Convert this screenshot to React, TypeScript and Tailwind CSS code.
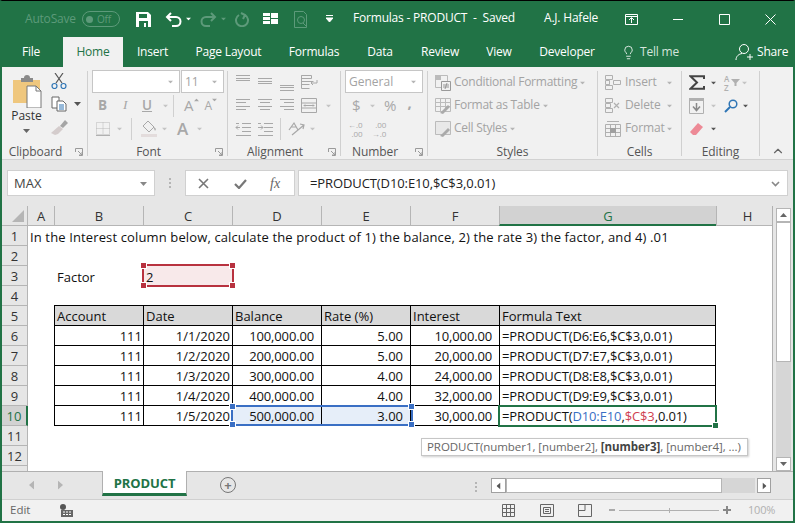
import type { ReactNode } from "react";
import { ChevronUp, Lightbulb } from "lucide-react";

const GREY = "#a8a8a8";
const DIM = "#5d9a7a";

const TABS = [
  { label: "File", w: "w-[58px] mr-[3px]" },
  { label: "Home", w: "w-[60px]", active: true },
  { label: "Insert", w: "w-[59px]" },
  { label: "Page Layout", w: "w-[93px]" },
  { label: "Formulas", w: "w-[78px]" },
  { label: "Data", w: "w-[54px]" },
  { label: "Review", w: "w-[66px]" },
  { label: "View", w: "w-[52px]" },
  { label: "Developer", w: "w-[84px]" },
];

const COLS = ["A", "B", "C", "D", "E", "F", "G", "H"];

const RECORDS = [
  ["111", "1/1/2020", "100,000.00", "5.00", "10,000.00", "=PRODUCT(D6:E6,$C$3,0.01)"],
  ["111", "1/2/2020", "200,000.00", "5.00", "20,000.00", "=PRODUCT(D7:E7,$C$3,0.01)"],
  ["111", "1/3/2020", "300,000.00", "4.00", "24,000.00", "=PRODUCT(D8:E8,$C$3,0.01)"],
  ["111", "1/4/2020", "400,000.00", "4.00", "32,000.00", "=PRODUCT(D9:E9,$C$3,0.01)"],
  ["111", "1/5/2020", "500,000.00", "3.00", "30,000.00", ""],
];

function Ic({ w = 16, h = 16, children, className }: { w?: number; h?: number; children: ReactNode; className?: string }) {
  return (
    <svg width={w} height={h} viewBox={`0 0 ${w} ${h}`} fill="none" className={`shrink-0 ${className ?? ""}`}>
      {children}
    </svg>
  );
}

function Caret({ color = GREY, className }: { color?: string; className?: string }) {
  return (
    <Ic w={7} h={4} className={className}>
      <path d="M0 0h7L3.500 4z" fill={color} />
    </Ic>
  );
}

function Lines({ ys, xs, color = GREY }: { ys: number[]; xs: [number, number][]; color?: string }) {
  return (
    <Ic w={16} h={16}>
      {ys.map((y, i) => (
        <path key={y} d={`M${xs[i][0]} ${y + 0.5}H${xs[i][1]}`} stroke={color} />
      ))}
    </Ic>
  );
}

function Launcher() {
  return (
    <Ic w={8} h={8} className="absolute right-[4px] bottom-[0px]">
      <path d="M.5 4V.5H7.500V7.500H4M3 3l4 4M4 7h3V4" stroke="#9a9a9a" />
    </Ic>
  );
}

function Group({ label, w, children, launcher }: { label: string; w: string; children: ReactNode; launcher?: boolean }) {
  return (
    <div className={`relative flex h-[85px] shrink-0 flex-col border-r border-[#d0d0d0] ${w}`}>
      <div className="h-[69px] shrink-0">{children}</div>
      <div className={`mt-[4px] shrink-0 text-center text-[12px] leading-[15px] tracking-[-0.1px] text-[#555] ${launcher ? "pr-[18px]" : ""}`}>
        {label}
      </div>
      {launcher && <Launcher />}
    </div>
  );
}

function StyleRow({ label, icon }: { label: string; icon: ReactNode }) {
  return (
    <div className="flex h-[23px] items-center whitespace-nowrap pl-[7px]">
      {icon}
      <span className="-mt-px ml-[3px] text-[12px] tracking-[-0.25px] text-[#a3a3a3]">{label}</span>
      <Caret className="ml-[2px] scale-75" color="#b5b5b5" />
    </div>
  );
}

function CellRow({ label, icon }: { label: string; icon: ReactNode }) {
  return (
    <div className="flex h-[23px] items-center whitespace-nowrap pl-[7px]">
      {icon}
      <span className="-mt-px ml-[4px] w-[41px] text-[12px] tracking-[-0.1px] text-[#a3a3a3]">{label}</span>
      <Caret className="scale-75" color="#b5b5b5" />
    </div>
  );
}

function Ribbon() {
  return (
    <div className="flex h-[93px] border-b border-[#d2d2d2] bg-[#f1f1f1] pt-[4px]">
      <Group label="Clipboard" w="w-[86px]" launcher>
        <div className="flex h-full">
          <div className="flex w-[49px] flex-col items-center pt-[4px]">
            <Ic w={30} h={33}>
              <path d="M1 5h27v23H1z" fill="#efc77e" />
              <path d="M9 3h3a3 3 0 016 0h3v4H9z" fill="#8a8a8a" />
              <path d="M15 11h9l5 5v17H15z" fill="#fff" stroke="#777" />
              <path d="M24 11v5h5" stroke="#777" />
            </Ic>
            <span className="text-[12px] leading-[15px] text-[#333]">Paste</span>
            <Caret color="#666" className="mt-[6px]" />
          </div>
          <div className="flex flex-col pt-[2px]">
            <Ic w={16} h={16}>
              <path d="M4 0l7 10M12 0L5 10" stroke="#555" strokeWidth="1.200" />
              <circle cx="3.500" cy="13" r="2.500" stroke="#2f75b5" strokeWidth="1.200" />
              <circle cx="12.500" cy="13" r="2.500" stroke="#2f75b5" strokeWidth="1.200" />
            </Ic>
            <div className="mt-[7px] flex items-center gap-[7px]">
              <Ic w={16} h={16}>
                <path d="M1 1h7v11H1z" fill="#fff" stroke="#666" />
                <path d="M6 5h6l3 3v7H6z" fill="#fff" stroke="#666" />
                <path d="M8 9h5M8 11h5M8 13h5" stroke="#2f75b5" />
              </Ic>
              <Caret color="#555" />
            </div>
            <Ic w={17} h={15} className="mt-[8px]">
              <path d="M9 6l5-6 3 3-5 5z" fill="#a5a5a5" />
              <path d="M0 13l8-7 4 3-5 5-3 1z" fill="#d4cccc" />
            </Ic>
          </div>
        </div>
      </Group>
      <Group label="Font" w="w-[140px]" launcher>
        <div className="-mt-px flex h-[24px] gap-[1px] pl-[4px]">
          <div className="flex h-[23px] w-[88px] items-center justify-end border border-[#c6c6c6] bg-white pr-[5px]">
            <Caret color="#b5b5b5" className="scale-75" />
          </div>
          <div className="flex h-[23px] w-[43px] items-center justify-between border border-[#c6c6c6] bg-white pl-[3px] pr-[5px] text-[12px] text-[#a3a3a3]">
            11
            <Caret color="#b5b5b5" className="scale-75" />
          </div>
        </div>
        <div className="flex h-[23px] items-center pl-[10px] text-[13.500px] text-[#a8a8a8]">
          <span className="w-[25px] font-bold">B</span>
          <span className="w-[19px] font-['Liberation_Serif',serif] italic">I</span>
          <span className="w-[20px] font-semibold underline">U</span>
          <Caret color="#c4c4c4" className="scale-75" />
          <span className="ml-[4px] h-[22px] border-l border-[#d0d0d0]" />
          <span className="ml-[10px] text-[15px] leading-none">A</span>
          <Caret color="#a8a8a8" className="-ml-[1px] mb-[11px] rotate-180 scale-75" />
          <span className="ml-[5px] text-[12px] leading-none">A</span>
          <Caret color="#a8a8a8" className="-ml-[1px] mb-[11px] scale-75" />
        </div>
        <div className="flex h-[23px] items-center pl-[8px]">
          <Ic w={14} h={14}>
            <path d="M.5.5h13v12H.5zM7 .5v12M.5 6.500h13" stroke="#b8b8b8" strokeDasharray="1 1" />
            <path d="M0 13.500h14" stroke="#b0b0b0" />
          </Ic>
          <Caret color="#c4c4c4" className="ml-[6px] scale-75" />
          <span className="ml-[8px] h-[22px] border-l border-[#d0d0d0]" />
          <Ic w={16} h={17} className="ml-[9px]">
            <path d="M7 1l6 6-5 5-6-6z" stroke="#a8a8a8" />
            <path d="M12 6l3 3-1 2z" fill="#a8a8a8" />
            <path d="M0 14h16v3H0z" fill="#e3dcdc" />
          </Ic>
          <Caret color="#c4c4c4" className="ml-[4px] scale-75" />
          <span className="ml-[9px] text-[17px] font-semibold leading-none text-[#a8a8a8]">A</span>
          <Caret color="#c4c4c4" className="ml-[8px] scale-75" />
        </div>
      </Group>
      <Group label="Alignment" w="w-[113px]" launcher>
        <div className="flex h-[23px] items-center gap-[6px] pl-[7px]">
          <Lines ys={[0, 3, 5]} xs={[[1, 15], [1, 15], [1, 15]]} />
          <Lines ys={[3, 6, 8]} xs={[[1, 15], [1, 15], [1, 15]]} />
          <Lines ys={[10, 12, 15]} xs={[[1, 15], [1, 15], [1, 15]]} />
          <Ic w={17} h={16}>
            <path d="M.5.5h10v3H.5zM.5 6.500h12M.5 9.500h8M.5 13.500h8M.5.5v13M16 5v3h-6M12 6l-2 2 2 2" stroke={GREY} />
          </Ic>
        </div>
        <div className="flex h-[23px] items-center gap-[6px] pl-[7px]">
          <Lines ys={[1, 4, 8, 11]} xs={[[1, 15], [1, 11], [1, 15], [1, 11]]} />
          <Lines ys={[1, 4, 8, 11]} xs={[[1, 15], [3, 13], [1, 15], [3, 13]]} />
          <Lines ys={[1, 4, 8, 11]} xs={[[1, 15], [5, 15], [1, 15], [5, 15]]} />
          <Ic w={16} h={16}>
            <path d="M.5.5h15v14H.5zM.5 5h15M.5 10h15M3 7.500h10M4 6.500l-1 1 1 1M12 6.500l1 1-1 1" stroke={GREY} />
          </Ic>
          <Caret color="#c4c4c4" className="ml-[2px] scale-75" />
        </div>
        <div className="flex h-[23px] items-center pl-[7px]">
          <Ic w={16} h={16}>
            <path d="M7 2.500h9M7 6.500h9M7 10.500h9M1 14.500h15M1 2.500h3M5 6.500H1M3 4.500l-2 2 2 2" stroke={GREY} />
          </Ic>
          <Ic w={16} h={16} className="ml-[6px]">
            <path d="M7 2.500h9M7 6.500h9M7 10.500h9M1 14.500h15M1 2.500h3M1 6.500h5M4 4.500l2 2-2 2" stroke={GREY} />
          </Ic>
          <span className="ml-[7px] h-[22px] border-l border-[#d0d0d0]" />
          <Ic w={18} h={16} className="ml-[7px]">
            <path d="M1 9l5-7 4 7M3 6h5M4 14L16 4M12 3l4 1-1 4" stroke={GREY} strokeWidth="1.200" />
          </Ic>
          <Caret color="#c4c4c4" className="ml-[3px] scale-75" />
        </div>
      </Group>
      <Group label="Number" w="w-[87px]" launcher>
        <div className="-mt-px flex h-[24px] pl-[4px]">
          <div className="flex h-[23px] w-[78px] items-center justify-between border border-[#c6c6c6] bg-white pl-[3px] pr-[5px] text-[12px] text-[#a3a3a3]">
            General
            <Caret color="#b5b5b5" className="scale-75" />
          </div>
        </div>
        <div className="flex h-[23px] items-center pl-[11px] text-[15px] leading-none text-[#a8a8a8]">
          <span className="w-[9px]">$</span>
          <Caret color="#c4c4c4" className="ml-[8px] scale-75" />
          <span className="ml-[8px]">%</span>
          <span className="ml-[11px] mb-[6px] text-[15px] font-bold">,</span>
        </div>
        <div className="flex h-[23px] items-center gap-[9px] pl-[7px] text-right text-[8px] leading-[9px] text-[#a8a8a8]">
          <span>←.0<br />.00</span>
          <span>.00<br />→.0</span>
        </div>
      </Group>
      <Group label="Styles" w="w-[170px]">
        <StyleRow
          label="Conditional Formatting"
          icon={
            <Ic w={16} h={16}>
              <path d="M.5.5h12v12H.5z" stroke="#bbb" />
              <path d="M0 0h6v5H0z" fill="#bbb" />
              <path d="M6.500 6.500h9v9h-9z" fill="#f1f1f1" stroke="#999" />
              <path d="M8 10h6M8 12h6M12 8l-2 6" stroke="#999" />
            </Ic>
          }
        />
        <StyleRow
          label="Format as Table"
          icon={
            <Ic w={16} h={16}>
              <path d="M.5.5h15v13H.5zM.5 4.500h15M.5 8.500h15M5.500.5v13M10.500.5v13" stroke="#bbb" />
              <path d="M5 15l8-8 2 2-7 7z" fill="#aaa" />
            </Ic>
          }
        />
        <StyleRow
          label="Cell Styles"
          icon={
            <Ic w={16} h={16}>
              <path d="M.5.5h15v13H.5z" stroke="#bbb" fill="#e8e8e8" />
              <path d="M5 15l8-8 2 2-7 7z" fill="#aaa" />
            </Ic>
          }
        />
      </Group>
      <Group label="Cells" w="w-[84px]">
        <CellRow
          label="Insert"
          icon={
            <Ic w={16} h={16}>
              <path d="M.5.5h7v4h-7zM.5 5.500h4v4h-4zM.5 10.500h7v4h-7zM8.500 5.500h7v4h-7zM4.500 5.500v4" stroke="#b0b0b0" />
            </Ic>
          }
        />
        <CellRow
          label="Delete"
          icon={
            <Ic w={16} h={16}>
              <path d="M.5.5h7v4h-7zM.5 5.500h5v4h-5zM.5 10.500h7v4h-7z" stroke="#b0b0b0" />
              <path d="M9 5l5 5M14 5l-5 5" stroke="#b0b0b0" strokeWidth="1.200" />
            </Ic>
          }
        />
        <CellRow
          label="Format"
          icon={
            <Ic w={16} h={16}>
              <path d="M.5 3.500h15v12H.5zM.5 7.500h15M.5 11.500h15M5.500 3.500v12M10.500 3.500v12M2 .5h12" stroke="#b0b0b0" />
              <path d="M5 7h6v5H5z" fill="#a0a0a0" />
            </Ic>
          }
        />
      </Group>
      <Group label="Editing" w="w-[78px]">
        <div className="flex h-[23px] items-center pl-[7px]">
          <Ic w={16} h={15}>
            <path d="M15 4V1.200H1.500L8 7.500 1.500 13.800H15V11" stroke="#444" strokeWidth="2" />
          </Ic>
          <Caret color="#555" className="ml-[5px] scale-75" />
          <span className="ml-[7px] text-[8px] font-semibold leading-[9px] text-[#b0b0b0]">
            A<br />Z
          </span>
          <Ic w={9} h={7} className="ml-[2px]">
            <path d="M0 0h9L5.500 4v3h-2V4z" fill="#b0b0b0" />
          </Ic>
          <Caret color="#c4c4c4" className="ml-[1px] scale-75" />
        </div>
        <div className="flex h-[23px] items-center pl-[7px]">
          <Ic w={15} h={16}>
            <path d="M.5.5h14v15H.5z" stroke="#b0b0b0" />
            <path d="M0 0h15v3H0z" fill="#b0b0b0" />
            <path d="M7.500 5v7M4 8.500l3.500 4 3.500-4" stroke="#888" strokeWidth="1.500" />
          </Ic>
          <Caret color="#c4c4c4" className="ml-[6px] scale-75" />
          <Ic w={14} h={14} className="ml-[7px]">
            <circle cx="9" cy="5" r="3.800" stroke="#2f75b5" strokeWidth="1.500" />
            <path d="M6 8L1 13" stroke="#2f75b5" strokeWidth="2" />
          </Ic>
          <Caret color="#555" className="ml-[4px] scale-75" />
        </div>
        <div className="flex h-[23px] items-center pl-[7px]">
          <Ic w={15} h={14}>
            <path d="M9 1l5 4-7 8H4L1 10z" fill="#ed8a96" />
          </Ic>
          <Caret color="#555" className="ml-[6px] scale-75" />
        </div>
      </Group>
      <div className="flex flex-1 items-end justify-end pb-[1px] pr-[8px]">
        <ChevronUp size={14} strokeWidth={2} color="#666" />
      </div>
    </div>
  );
}

function TitleBar() {
  return (
    <div className="flex h-[36px] items-center whitespace-nowrap bg-[#217346] text-[12px] tracking-[-0.2px] text-white">
      <span className="ml-[23px] w-[57px]" style={{ color: DIM }}>AutoSave</span>
      <div className="flex h-[16px] w-[38px] items-center gap-[4px] rounded-full border border-[#5d9a7a] pl-[3px] text-[10px] text-[#5d9a7a]">
        <span className="h-[7px] w-[7px] rounded-full bg-[#5d9a7a]" />
        Off
      </div>
      <Ic w={15} h={15} className="ml-[16px]">
        <path d="M0 0h12l3 3v12H0z" fill="#fff" />
        <path d="M3 2h8v4H3zM3 9h9v6H3z" fill="#217346" />
        <path d="M8 11h2v4H8z" fill="#fff" />
      </Ic>
      <Ic w={17} h={15} className="ml-[14px]">
        <path d="M6 1L2 5l4 4M2 5h9a4 4 0 010 9H7" stroke="#fff" strokeWidth="2" />
      </Ic>
      <Caret color="#fff" className="ml-[3px] scale-75" />
      <Ic w={17} h={15} className="ml-[8px]">
        <path d="M11 1l4 4-4 4M15 5H6a4 4 0 000 9h4" stroke={DIM} strokeWidth="2" />
      </Ic>
      <Caret color={DIM} className="ml-[3px] scale-75" />
      <Ic w={14} h={15} className="ml-[8px]">
        <path d="M4 3a6 6 0 106 0M6 1l4 2-2 4" stroke={DIM} strokeWidth="2" />
      </Ic>
      <Ic w={15} h={12} className="ml-[14px]">
        <path d="M0 0h7v3H0zM0 4h7v3H0zM0 8h7v3H0zM8 0h7v5H8zM8 6h7v5H8z" fill="#fff" />
      </Ic>
      <Ic w={14} h={17} className="ml-[16px]">
        <path d="M.5.5h9l3 3v13H.5z" stroke={DIM} />
        <circle cx="7" cy="9" r="3.500" stroke={DIM} />
        <path d="M9 12l3 3" stroke={DIM} />
      </Ic>
      <Ic w={7} h={8} className="ml-[18px]">
        <path d="M0 .5h7M0 3h7L3.500 7z" stroke="#fff" fill="#fff" strokeWidth="1" />
      </Ic>
      <span className="-mt-[2px] ml-[20px] w-[191px] whitespace-pre">Formulas - PRODUCT  -  Saved</span>
      <span className="-mt-[2px] w-[81px]">A.J. Hafele</span>
      <Ic w={13} h={11}>
        <path d="M.5.5h12v10H.5zM.5 2.500h12M6.500 9V4M4 6l2.500-2.500L9 6" stroke="#fff" />
      </Ic>
      <Ic w={10} h={1} className="ml-[35px]">
        <path d="M0 .5h10" stroke="#fff" />
      </Ic>
      <Ic w={11} h={11} className="ml-[36px]">
        <path d="M.5.5h10v10h-10z" stroke="#fff" />
      </Ic>
      <Ic w={11} h={11} className="ml-[35px]">
        <path d="M.5.5l10 10M10.500.5l-10 10" stroke="#fff" />
      </Ic>
    </div>
  );
}

function TabRow() {
  return (
    <div className="flex h-[30px] items-stretch whitespace-nowrap bg-[#217346] text-[12px] tracking-[-0.2px] text-white">
      {TABS.map((t) => (
        <div
          key={t.label}
          className={`flex items-center justify-center ${t.w} ${t.active ? "bg-[#f1f1f1] text-[#217346]" : ""}`}
        >
          {t.label}
        </div>
      ))}
      <div className="flex items-center pl-[12px]">
        <Lightbulb size={15} strokeWidth={1.300} color="#fff" />
        <span className="ml-[4px] w-[95px] text-[#d5e5dc]">Tell me</span>
      </div>
      <div className="flex items-center">
        <Ic w={18} h={18}>
          <circle cx="9" cy="6" r="4.500" stroke="#fff" />
          <path d="M1 17c0-4 3-6 6-6.500M12 14h6M15 11v6" stroke="#fff" />
        </Ic>
        <span className="ml-[4px]">Share</span>
      </div>
    </div>
  );
}

function FormulaBar() {
  return (
    <div className="flex h-[46px] items-start bg-[#e6e6e6] pl-[5px] pt-[10px] text-[13px]">
      <div className="flex h-[26px] w-[148px] items-center justify-between border border-[#d0d0d0] bg-white pl-[6px] pr-[7px] pt-[1px] text-[#444]">
        MAX
        <Caret color="#888" />
      </div>
      <div className="flex h-[26px] w-[30px] items-center justify-center">
        <span className="h-[10px] border-l-2 border-dotted border-[#b5b5b5]" />
      </div>
      <div className="flex h-[26px] w-[110px] items-center border border-[#d0d0d0] bg-white pl-[12px]">
        <Ic w={11} h={11}>
          <path d="M1 1l9 9M10 1l-9 9" stroke="#777" strokeWidth="1.600" />
        </Ic>
        <Ic w={13} h={11} className="ml-[25px]">
          <path d="M1 6l4 4 7-8" stroke="#777" strokeWidth="2.200" />
        </Ic>
        <span className="ml-[23px] font-['Liberation_Serif',serif] text-[14px] italic text-[#666]">fx</span>
      </div>
      <div className="ml-[3px] flex h-[26px] w-[490px] items-center justify-between border border-[#d0d0d0] bg-white pl-[11px] pr-[7px] pt-[1px] tracking-[-0.1px] text-[#222]">
        =PRODUCT(D10:E10,$C$3,0.01)
        <Ic w={9} h={6}>
          <path d="M1 1l3.500 3.500L8 1" stroke="#888" strokeWidth="1.600" />
        </Ic>
      </div>
    </div>
  );
}

const ROW_HEAD = "flex items-center justify-center border-r border-b border-[#b5b5b5] bg-[#e6e6e6] text-[#333]";

function Handle({ pos, color }: { pos: string; color: string }) {
  return <span className={`absolute h-[5px] w-[5px] ring-1 ring-white ${pos} ${color}`} />;
}

function Corners({ color }: { color: string }) {
  return (
    <>
      <Handle pos="-left-[3px] -top-[3px]" color={color} />
      <Handle pos="-right-[3px] -top-[3px]" color={color} />
      <Handle pos="-left-[3px] -bottom-[3px]" color={color} />
      <Handle pos="-right-[3px] -bottom-[3px]" color={color} />
    </>
  );
}

function Sheet() {
  return (
    <div className="flex h-[265px] bg-[#e6e6e6]">
      <div className="relative grid flex-none grid-cols-[26px_26px_89px_89px_89px_89px_89px_217px_56px] grid-rows-[20px_repeat(13,20px)] overflow-hidden border-r border-[#b0b0b0] bg-white text-[13px] leading-none text-[#111] [&>div]:pt-[2px]">
        <div className="flex items-end justify-end border-r border-b border-[#b5b5b5] bg-[#e6e6e6] pb-[3px] pr-[3px]">
          <Ic w={12} h={12}>
            <path d="M12 0v12H0z" fill="#b5b5b5" />
          </Ic>
        </div>
        {COLS.map((c, i) => (
          <div
            key={c}
            className={`flex items-center justify-center border-[#b5b5b5] ${i > 0 ? "border-l" : ""} ${
              c === "G" ? "border-b-2 border-b-[#217346] bg-[#d2d2d2] text-[#217346]" : "border-b bg-[#e6e6e6] text-[#333]"
            } ${c === "H" ? "pl-[6px]" : ""}`}
          >
            {c}
          </div>
        ))}

        {/* row 1 */}
        <div className={ROW_HEAD}>1</div>
        <div className="col-span-8 flex items-center whitespace-nowrap pl-[2px] tracking-[0.13px]">
          In the Interest column below, calculate the product of 1) the balance, 2) the rate 3) the factor, and 4) .01
        </div>

        <div className={ROW_HEAD}>2</div>
        <div className="col-span-8" />

        {/* row 3 */}
        <div className={ROW_HEAD}>3</div>
        <div />
        <div className="flex items-center pl-[3px]">Factor</div>
        <div className="flex items-center bg-[#f8e9ea] pl-[3px]">2</div>
        <div className="col-span-5" />

        <div className={ROW_HEAD}>4</div>
        <div className="col-span-8" />

        {/* table header */}
        <div className={ROW_HEAD}>5</div>
        <div />
        {["Account", "Date", "Balance", "Rate (%)", "Interest", "Formula Text"].map((h, i) => (
          <div
            key={h}
            className={`-mt-px flex items-center border-y border-l border-black bg-[#d9d9d9] pl-[2px] ${i === 5 ? "border-r" : ""}`}
          >
            {h}
          </div>
        ))}
        <div />

        {RECORDS.map((row, r) => {
          const selected = r === 4;
          return [
            <div
              key={`h${r}`}
              className={`flex items-center justify-center border-b ${
                selected
                  ? "border-r-2 border-b-[#b5b5b5] border-r-[#217346] bg-[#d2d2d2] text-[#217346]"
                  : "border-r border-[#b5b5b5] bg-[#e6e6e6] text-[#333]"
              }`}
            >
              {r + 6}
            </div>,
            <div key={`a${r}`} />,
            ...row.map((v, i) => (
              <div
                key={`${r}-${i}`}
                className={`flex items-center whitespace-nowrap border-l border-b border-black ${
                  i === 5 ? "border-r pl-[2px] tracking-[-0.12px]" : ""
                } ${i === 0 ? "justify-end pr-[1px]" : ""} ${i === 1 ? "justify-end pr-[2px]" : ""} ${
                  i >= 2 && i < 5 ? "justify-end pr-[7px]" : ""
                } ${selected && (i === 2 || i === 3) ? "bg-[#e6eef9]" : ""} ${
                  i === 2 || i === 4 ? "tracking-[-0.15px]" : ""
                }`}
              >
                {i === 5 && selected ? (
                  <span>
                    =PRODUCT(<span className="text-[#3a6fc4]">D10:E10</span>,<span className="text-[#cf4050]">$C$3</span>,0.01)
                  </span>
                ) : (
                  v
                )}
              </div>
            )),
            <div key={`z${r}`} />,
          ];
        })}

        <div className={ROW_HEAD}>11</div>
        <div className="col-span-8" />
        <div className={ROW_HEAD}>12</div>
        <div className="col-span-8" />
        <div className="border-r border-[#b5b5b5] bg-[#e6e6e6]" />
        <div className="col-span-8" />

        {/* range highlights */}
        <div className="absolute left-[140px] top-[58px] h-[23px] w-[92px] border-2 border-[#b8323f]">
          <Corners color="bg-[#b8323f]" />
        </div>
        <div className="absolute left-[229px] top-[199px] h-[21px] w-[182px] border-2 border-[#3a6fc4]">
          <Corners color="bg-[#3a6fc4]" />
        </div>
        <div className="absolute left-[496px] top-[199px] h-[22px] w-[219px] border-2 border-[#217346]">
          <Handle pos="-right-[3px] -bottom-[3px]" color="bg-[#217346]" />
        </div>
        <div className="absolute left-[419px] top-[232px] flex h-[18px] w-[327px] items-center whitespace-nowrap border border-[#c6c6c6] bg-white pb-[2px] pl-[5px] text-[11.500px] tracking-[-0.05px] text-[#666] shadow-[1px_1px_2px_rgba(0,0,0,0.2)]">
          PRODUCT(number1, [number2], <b className="ml-[3px] text-[#444]">[number3]</b>, [number4], ...)
        </div>
      </div>
      <div className="ml-[3px] flex w-[15px] flex-col pt-[2px]">
        <div className="flex h-[14px] shrink-0 items-center justify-center border border-[#b5b5b5] bg-white">
          <Caret color="#666" className="rotate-180" />
        </div>
        <div className="h-[140px] shrink-0 border border-[#b5b5b5] bg-white" />
        <div className="flex-1 bg-[#d6d6d6]" />
        <div className="flex h-[14px] shrink-0 items-center justify-center border border-[#b5b5b5] bg-white">
          <Caret color="#666" />
        </div>
      </div>
    </div>
  );
}

function SheetTabs() {
  return (
    <div className="flex h-[28px] items-start border-t border-[#b0b0b0] bg-[#e6e6e6]">
      <div className="flex h-[26px] w-[100px] items-center gap-[22px] pl-[26px]">
        <Caret color="#b5b5b5" className="rotate-90 scale-125" />
        <Caret color="#b5b5b5" className="-rotate-90 scale-125" />
      </div>
      <div className="-mt-px flex h-[25px] w-[85px] items-center justify-center border-x border-[#b0b0b0] border-b-[3px] border-b-[#217346] bg-white pt-[3px] text-[13px] font-bold tracking-[-0.1px] text-[#217346]">
        PRODUCT
      </div>
      <div className="ml-[33px] mt-[5px] flex h-[16px] w-[16px] items-center justify-center rounded-full border border-[#777] text-[13px] font-bold leading-none text-[#777]">
        +
      </div>
      <div className="ml-[239px] mt-[10px] h-[10px] border-l-2 border-dotted border-[#b5b5b5]" />
      <div className="ml-[14px] mt-[6px] flex h-[15px] w-[280px] items-stretch">
        <div className="flex w-[15px] items-center justify-center border border-[#a0a0a0] bg-white">
          <Caret color="#555" className="rotate-90" />
        </div>
        <div className="w-[216px] border border-[#b5b5b5] bg-white" />
        <div className="w-[33px] bg-[#d6d6d6]" />
        <div className="ml-[2px] flex w-[14px] items-center justify-center border border-[#a0a0a0] bg-white">
          <Caret color="#555" className="-rotate-90" />
        </div>
      </div>
    </div>
  );
}

function StatusBar() {
  return (
    <div className="flex h-[22px] items-center border-t border-[#d0d0d0] bg-[#f1f1f1] pb-[1px] pl-[8px] text-[11.500px] text-[#666]">
      <span className="w-[50px]">Edit</span>
      <Ic w={13} h={13}>
        <circle cx="3" cy="3" r="3" fill="#555" />
        <path d="M1 6h12v7H1z" fill="#666" />
        <path d="M3 8h2M6 8h2M9 8h2M3 10.500h2M6 10.500h2M9 10.500h2" stroke="#fff" />
      </Ic>
      <Ic w={13} h={13} className="ml-[429px]">
        <path d="M.5.5h12v12H.5zM4.500.5v12M8.500.5v12M.5 4.500h12M.5 8.500h12" stroke="#666" />
      </Ic>
      <Ic w={14} h={13} className="ml-[25px]">
        <path d="M.5.5h13v12H.5zM3.500 3.500h7v6h-7zM5 5.500h4M5 7.500h4" stroke="#666" />
      </Ic>
      <Ic w={14} h={13} className="ml-[24px]">
        <path d="M.5.5h13v12H.5zM7 .5v6H.5" stroke="#666" />
      </Ic>
      <Ic w={6} h={2} className="ml-[17px]">
        <path d="M0 1h6" stroke="#aaa" strokeWidth="2" />
      </Ic>
      <div className="relative ml-[4px] h-px w-[100px] bg-[#b0b0b0]">
        <span className="absolute left-1/2 top-[-2px] h-[5px] w-px bg-[#b0b0b0]" />
      </div>
      <Ic w={8} h={8} className="ml-[4px]">
        <path d="M0 4h8M4 0v8" stroke="#888" strokeWidth="2" />
      </Ic>
      <span className="ml-[17px] text-[11px] tracking-[-0.2px] text-[#b0b0b0]">100%</span>
    </div>
  );
}

export default function App() {
  return (
    <div className="h-[523px] w-[795px] overflow-hidden border-x-[2px] border-t border-b-[2px] border-x-[#217346] border-b-[#217346] border-t-black bg-[#e6e6e6] font-['Open_Sans',sans-serif]">
      <TitleBar />
      <TabRow />
      <Ribbon />
      <FormulaBar />
      <Sheet />
      <SheetTabs />
      <StatusBar />
    </div>
  );
}
